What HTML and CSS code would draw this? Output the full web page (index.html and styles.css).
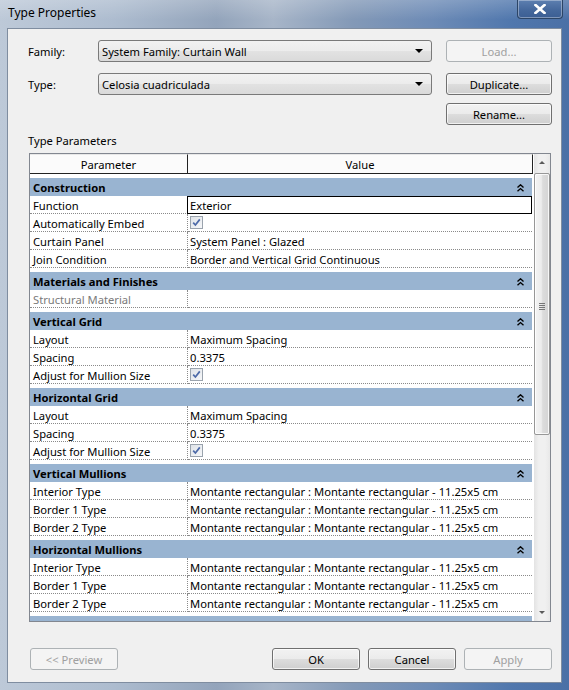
FILE: index.html
```html
<!DOCTYPE html>
<html>
<head>
<meta charset="utf-8">
<title>Type Properties</title>
<link rel="stylesheet" href="styles.css">
</head>
<body>
<div class="window">
  <div class="titlebar">
    <span class="title">Type Properties</span>
    <div class="close">
      <svg width="12" height="10" viewBox="0 0 12 10"><path d="M1.5 1 L10.5 9 M10.5 1 L1.5 9" stroke="#fff" stroke-width="2.6" stroke-linecap="square"/></svg>
    </div>
  </div>
  <div class="client">
    <div class="form">
      <div class="form-row">
        <span class="label">Family:</span>
        <div class="combo"><span>System Family: Curtain Wall</span><i class="arrow"></i></div>
        <div class="btn disabled">Load...</div>
      </div>
      <div class="form-row row2">
        <span class="label">Type:</span>
        <div class="combo"><span>Celosia cuadriculada</span><i class="arrow"></i></div>
        <div class="btn">Duplicate...</div>
      </div>
      <div class="form-row row3">
        <span class="label"></span>
        <div class="spacer"></div>
        <div class="btn">Rename...</div>
      </div>
    </div>
    <div class="section-label">Type Parameters</div>
    <div class="grid">
      <div class="grid-main">
        <div class="colhead">
          <div class="hc hc-param">Parameter</div>
          <div class="hc hc-value">Value</div>
        </div>
        <div class="body">
          <div class="group">
            <div class="ghead"><span>Construction</span><i class="chev"></i></div>
            <div class="row"><div class="p">Function</div><div class="v edit">Exterior</div></div>
            <div class="row"><div class="p">Automatically Embed</div><div class="v"><i class="check"></i></div></div>
            <div class="row"><div class="p">Curtain Panel</div><div class="v">System Panel : Glazed</div></div>
            <div class="row"><div class="p">Join Condition</div><div class="v">Border and Vertical Grid Continuous</div></div>
          </div>
          <div class="group">
            <div class="ghead"><span>Materials and Finishes</span><i class="chev"></i></div>
            <div class="row"><div class="p muted">Structural Material</div><div class="v"></div></div>
          </div>
          <div class="group">
            <div class="ghead"><span>Vertical Grid</span><i class="chev"></i></div>
            <div class="row"><div class="p">Layout</div><div class="v">Maximum Spacing</div></div>
            <div class="row"><div class="p">Spacing</div><div class="v">0.3375</div></div>
            <div class="row"><div class="p">Adjust for Mullion Size</div><div class="v"><i class="check"></i></div></div>
          </div>
          <div class="group">
            <div class="ghead"><span>Horizontal Grid</span><i class="chev"></i></div>
            <div class="row"><div class="p">Layout</div><div class="v">Maximum Spacing</div></div>
            <div class="row"><div class="p">Spacing</div><div class="v">0.3375</div></div>
            <div class="row"><div class="p">Adjust for Mullion Size</div><div class="v"><i class="check"></i></div></div>
          </div>
          <div class="group">
            <div class="ghead"><span>Vertical Mullions</span><i class="chev"></i></div>
            <div class="row"><div class="p">Interior Type</div><div class="v">Montante rectangular : Montante rectangular - 11.25x5 cm</div></div>
            <div class="row"><div class="p">Border 1 Type</div><div class="v">Montante rectangular : Montante rectangular - 11.25x5 cm</div></div>
            <div class="row"><div class="p">Border 2 Type</div><div class="v">Montante rectangular : Montante rectangular - 11.25x5 cm</div></div>
          </div>
          <div class="group">
            <div class="ghead"><span>Horizontal Mullions</span><i class="chev"></i></div>
            <div class="row"><div class="p">Interior Type</div><div class="v">Montante rectangular : Montante rectangular - 11.25x5 cm</div></div>
            <div class="row"><div class="p">Border 1 Type</div><div class="v">Montante rectangular : Montante rectangular - 11.25x5 cm</div></div>
            <div class="row"><div class="p">Border 2 Type</div><div class="v">Montante rectangular : Montante rectangular - 11.25x5 cm</div></div>
          </div>
          <div class="group">
            <div class="ghead"></div>
          </div>
        </div>
      </div>
      <div class="scrollbar">
        <div class="sb-arrow"><i class="tri-up"></i></div>
        <div class="sb-track">
          <div class="thumb"><i class="grip"></i></div>
        </div>
        <div class="sb-arrow"><i class="tri-down"></i></div>
      </div>
    </div>
    <div class="footer">
      <div class="btn disabled">&lt;&lt; Preview</div>
      <div class="footer-right">
        <div class="btn">OK</div>
        <div class="btn">Cancel</div>
        <div class="btn disabled">Apply</div>
      </div>
    </div>
  </div>
</div>
</body>
</html>
```

FILE: styles.css
```css
* { box-sizing: border-box; }
html, body { margin: 0; padding: 0; }
body {
  width: 569px;
  height: 690px;
  overflow: hidden;
  font-family: "Noto Sans", "Open Sans", sans-serif;
  font-size: 11.2px;
  color: #000;
}
.window {
  width: 569px;
  height: 690px;
  background:
    linear-gradient(90deg, #bdc9d8 0%, #adbccf 20%, #93a4bb 38%, #a7b5c8 48%, #8399b7 62%, #6d8bb6 76%, #5077ad 90%, #4b70a6 100%);
  display: flex;
  flex-direction: column;
}
.titlebar {
  height: 28px;
  display: flex;
  align-items: flex-start;
  justify-content: space-between;
  background: linear-gradient(180deg, rgba(255,255,255,0.2), rgba(255,255,255,0) 70%);
}
.title {
  padding: 5px 0 0 8px;
  font-size: 12px;
  line-height: 16px;
  color: #000;
}
.close {
  width: 46px;
  height: 19px;
  margin-right: 6px;
  border: 1px solid #2c4566;
  border-top: none;
  border-radius: 0 0 4px 4px;
  background: linear-gradient(180deg, #5d7fb0 0%, #45689c 55%, #3b5e93 100%);
  box-shadow: inset 0 0 0 1px rgba(255,255,255,0.35);
  display: flex;
  align-items: center;
  justify-content: center;
}
.client {
  margin: 0 7px 0 7px;
  height: 655px;
  background: #f0f0f0;
  border: 1px solid #7f8da0;
  display: flex;
  flex-direction: column;
}
.form {
  padding: 11px 9px 0 20px;
}
.form-row {
  display: flex;
  align-items: center;
  height: 22px;
}
.row2 { margin-top: 11px; }
.row3 { margin-top: 8px; }
.label {
  width: 70px;
}
.combo {
  width: 334px;
  height: 22px;
  border: 1px solid #7a7a7a;
  border-radius: 3px;
  background: linear-gradient(180deg, #f2f2f2 0%, #ececec 50%, #e2e2e2 51%, #dadada 100%);
  display: flex;
  align-items: center;
  justify-content: space-between;
  padding: 0 8px 0 3px;
}
.spacer { width: 334px; }
.arrow {
  width: 0;
  height: 0;
  border-left: 4px solid transparent;
  border-right: 4px solid transparent;
  border-top: 4px solid #000;
}
.btn {
  height: 22px;
  border: 1px solid #707070;
  border-radius: 3px;
  background: linear-gradient(180deg, #f2f2f2 0%, #ebebeb 50%, #dddddd 51%, #cfcfcf 100%);
  box-shadow: inset 0 0 0 1px rgba(255,255,255,0.7);
  display: flex;
  align-items: center;
  justify-content: center;
}
.form .btn { width: 106px; margin-left: 14px; }
.btn.disabled {
  border-color: #adb2b5;
  background: #f4f4f4;
  box-shadow: none;
  color: #a0a0a0;
}
.section-label {
  margin: 8px 0 4px 20px;
  line-height: 16px;
  height: 16px;
}
.grid {
  margin-left: 21px;
  width: 522px;
  height: 469px;
  border: 1px solid #828790;
  background: #fff;
  display: flex;
}
.grid-main {
  width: 504px;
  height: 467px;
  overflow: hidden;
  display: flex;
  flex-direction: column;
}
.colhead {
  display: flex;
  height: 20px;
  flex: none;
}
.hc {
  height: 20px;
  display: flex;
  align-items: center;
  justify-content: center;
  background: #fbfbfb;
  border-bottom: 1px solid #222;
  border-right: 1px solid #222;
  border-top: 1px solid #e8e8e8;
}
.hc-param { width: 158px; }
.hc-value { width: 345px; }
.body {
  flex: 1;
  overflow: hidden;
}
.group { padding-top: 4px; }
.ghead {
  height: 18px;
  width: 502px;
  background: #99b4d1;
  display: flex;
  align-items: center;
  justify-content: space-between;
  padding: 1px 8px 0 3px;
  font-weight: bold;
}
.chev {
  width: 7px;
  height: 8px;
  background:
    url("data:image/svg+xml,%3Csvg xmlns='http://www.w3.org/2000/svg' width='7' height='8' viewBox='0 0 7 8'%3E%3Cpath d='M0.5 3.5 L3.5 0.8 L6.5 3.5 M0.5 7.3 L3.5 4.6 L6.5 7.3' fill='none' stroke='%23000' stroke-width='1.4'/%3E%3C/svg%3E") no-repeat;
}
.row {
  display: flex;
  height: 18px;
  width: 502px;
}
.p, .v {
  height: 18px;
  border-bottom: 1px dotted #8a8a8a;
  display: flex;
  align-items: center;
  padding: 1px 0 0 3px;
  white-space: nowrap;
  overflow: hidden;
}
.p {
  width: 158px;
  border-right: 1px dotted #8a8a8a;
}
.v {
  width: 344px;
  padding-left: 2px;
}
.v.edit {
  border: 1px solid #000;
  margin-left: -1px;
  width: 345px;
  padding: 0 0 0 2px;
}
.muted { color: #7a7a7a; }
.check {
  width: 13px;
  height: 13px;
  border: 1px solid #9aa3ad;
  background:
    url("data:image/svg+xml,%3Csvg xmlns='http://www.w3.org/2000/svg' width='11' height='11' viewBox='0 0 11 11'%3E%3Cpath d='M2.2 5.6 L4.4 8 L8.8 2.4' fill='none' stroke='%234d6aa8' stroke-width='1.7'/%3E%3C/svg%3E") center no-repeat,
    linear-gradient(135deg, #dfe3e8, #f6f7f9);
  display: block;
  margin-top: -1px;
}
.scrollbar {
  width: 16px;
  height: 467px;
  background: linear-gradient(90deg, #e3e3e3, #f0f0f0 30%, #f0f0f0 70%, #e8e8e8);
  display: flex;
  flex-direction: column;
}
.sb-arrow {
  height: 17px;
  display: flex;
  align-items: center;
  justify-content: center;
  flex: none;
}
.tri-up, .tri-down {
  width: 0;
  height: 0;
  border-left: 3.5px solid transparent;
  border-right: 3.5px solid transparent;
}
.tri-up { border-bottom: 3px solid #5a5a5a; }
.tri-down { border-top: 3px solid #5a5a5a; }
.sb-track {
  flex: 1;
  padding-top: 2px;
}
.thumb {
  height: 262px;
  border: 1px solid #979797;
  border-radius: 2px;
  background: linear-gradient(90deg, #f4f4f4 0%, #ececec 45%, #dcdcdc 55%, #d4d4d4 100%);
  box-shadow: inset 0 0 0 1px rgba(255,255,255,0.8);
  display: flex;
  align-items: center;
  justify-content: center;
}
.grip {
  width: 6px;
  height: 7px;
  background: repeating-linear-gradient(180deg, #777 0 1px, transparent 1px 2px);
  margin-top: 4px;
}
.footer {
  margin-top: 26px;
  padding: 0 9px 0 22px;
  display: flex;
  justify-content: space-between;
}
.footer .btn { width: 88px; }
.footer-right {
  display: flex;
  gap: 8px;
}
```
